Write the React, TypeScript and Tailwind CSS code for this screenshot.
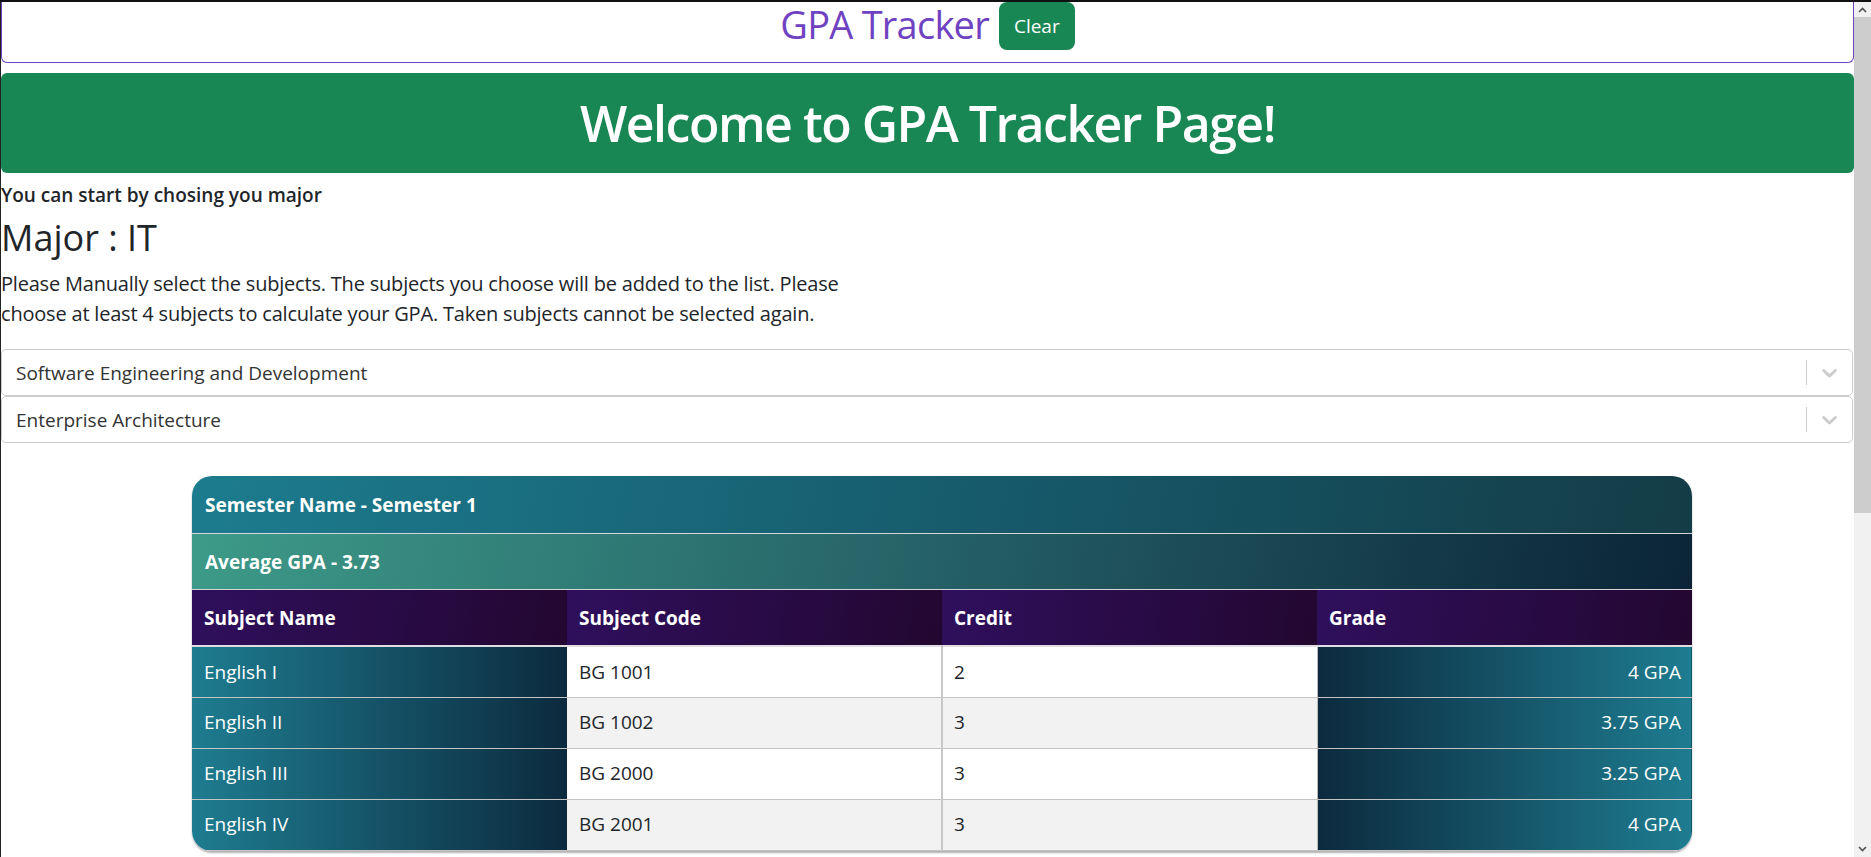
import React from "react";

const font = { fontFamily: '"Open Sans", "Noto Sans", sans-serif' };

const subjects = [
  { name: "English I", code: "BG 1001", credit: 2, grade: "4 GPA" },
  { name: "English II", code: "BG 1002", credit: 3, grade: "3.75 GPA" },
  { name: "English III", code: "BG 2000", credit: 3, grade: "3.25 GPA" },
  { name: "English IV", code: "BG 2001", credit: 3, grade: "4 GPA" },
];

const chosen = ["Software Engineering and Development", "Enterprise Architecture"];

function Chevron() {
  return (
    <svg viewBox="0 0 20 20" width="25" height="25" fill="#cccccc">
      <path d="M4.516 7.548c0.436-0.446 1.043-0.481 1.576 0l3.908 3.747 3.908-3.747c0.533-0.481 1.141-0.446 1.574 0 0.436 0.445 0.408 1.197 0 1.615-0.406 0.418-4.695 4.502-4.695 4.502-0.217 0.223-0.502 0.335-0.787 0.335s-0.57-0.112-0.789-0.335c0 0-4.287-4.084-4.695-4.502s-0.436-1.17 0-1.615z" />
    </svg>
  );
}

function SubjectSelect({ value }: { value: string }) {
  return (
    <div className="flex h-[47px] items-center rounded-[5px] border border-[#cccccc] bg-white">
      <div className="flex-1 pl-[14px] text-[19px] leading-[24px] text-[#333333]">{value}</div>
      <div className="my-[10px] w-px self-stretch bg-[#cccccc]" />
      <div className="p-[10px]">
        <Chevron />
      </div>
    </div>
  );
}

export default function App() {
  return (
    <div className="flex h-screen flex-col overflow-hidden bg-white" style={font}>
      <div className="h-[2px] shrink-0 bg-[#111111]" />
      <div className="flex min-h-0 flex-1">
        <main className="min-w-0 flex-1 overflow-hidden border-l border-[#222222] text-[#212529]">
          {/* top bar */}
          <header className="flex items-start justify-center gap-[10px] rounded-b-md border-x border-b border-[#6f42c1] pb-[12px]">
            <h1 className="mt-[4px] text-[38px] leading-[36px] tracking-[-0.02em] text-[#6f42c1]">GPA Tracker</h1>
            <button className="h-[48px] rounded-lg bg-[#198754] px-[15px] text-[19px] text-white">Clear</button>
          </header>

          {/* banner */}
          <div className="mt-[10px] flex h-[100px] items-center justify-center rounded-md bg-[#198754]">
            <h2 className="text-[50px] font-semibold leading-none tracking-[-0.03em] text-white">Welcome to GPA Tracker Page!</h2>
          </div>

          <p className="mt-[10px] text-[19px] font-semibold leading-[24px]">You can start by chosing you major</p>
          <h3 className="mt-[9px] text-[36px] font-medium leading-[1.2]">Major : IT</h3>
          <p className="mt-[10px] text-[20px] leading-[30px] tracking-[-0.01em]">
            Please Manually select the subjects. The subjects you choose will be added to the list. Please
            <br />
            choose at least 4 subjects to calculate your GPA. Taken subjects cannot be selected again.
          </p>

          <div className="mt-[20px] mr-px flex flex-col">
            {chosen.map((c) => (
              <SubjectSelect key={c} value={c} />
            ))}
          </div>

          {/* semester table */}
          <div className="ml-[191px] mt-[33px] w-[1500px] overflow-hidden rounded-[20px] shadow-[0_2px_2px_rgba(0,0,0,0.3)]">
            <table className="w-full table-fixed border-collapse text-[19px] text-white">
              <thead>
                <tr className="h-[57px] border-b border-[#d6d6d6] bg-[linear-gradient(100deg,#1c7c8e,#16596a_55%,#143c46)]">
                  <th colSpan={4} className="px-[13px] pt-[2px] text-left font-bold">Semester Name - Semester 1</th>
                </tr>
                <tr className="h-[56px] border-b border-[#d6d6d6] bg-[linear-gradient(100deg,#3d9a88,#27666a_45%,#0b2438)]">
                  <th colSpan={4} className="px-[13px] pt-[2px] text-left font-bold">Average GPA - 3.73</th>
                </tr>
                <tr className="h-[57px] border-b-2 border-[#dedde3]">
                  {["Subject Name", "Subject Code", "Credit", "Grade"].map((h) => (
                    <th key={h} className="bg-[linear-gradient(100deg,#2f0f5d,#230730)] px-[12px] pt-[2px] text-left font-bold">
                      {h}
                    </th>
                  ))}
                </tr>
              </thead>
              <tbody>
                {subjects.map((s, i) => (
                  <tr key={s.code} className={`h-[51px] border-b border-[#c4c4c4] ${i % 2 ? "bg-[#f2f2f2]" : "bg-white"}`}>
                    <td className="bg-[linear-gradient(90deg,#1e7c90,#0c2a3e)] px-[12px]">{s.name}</td>
                    <td className="px-[12px] text-[#212529]">{s.code}</td>
                    <td className="border-l-2 border-[#c8c8c8] px-[11px] text-[#212529]">{s.credit}</td>
                    <td className="border-l border-[#bdbdbd] bg-[linear-gradient(90deg,#0c2a3e,#1e7c90)] px-[11px] text-right">
                      {s.grade}
                    </td>
                  </tr>
                ))}
              </tbody>
            </table>
          </div>
          <div className="h-[300px]" />
        </main>

        {/* window scrollbar */}
        <div className="flex w-[17px] shrink-0 flex-col bg-[#f1f1f1]">
          <div className="flex h-[15px] items-center justify-center">
            <svg width="9" height="6" viewBox="0 0 9 6"><path d="M1 5 4.5 1.5 8 5" stroke="#505050" strokeWidth="1.6" fill="none" /></svg>
          </div>
          <div className="h-[496px] bg-[#cdcdcd]" />
          <div className="flex-1" />
          <div className="flex h-[17px] items-center justify-center">
            <svg width="9" height="6" viewBox="0 0 9 6"><path d="M1 1 4.5 4.5 8 1" stroke="#505050" strokeWidth="1.6" fill="none" /></svg>
          </div>
        </div>
      </div>
    </div>
  );
}
